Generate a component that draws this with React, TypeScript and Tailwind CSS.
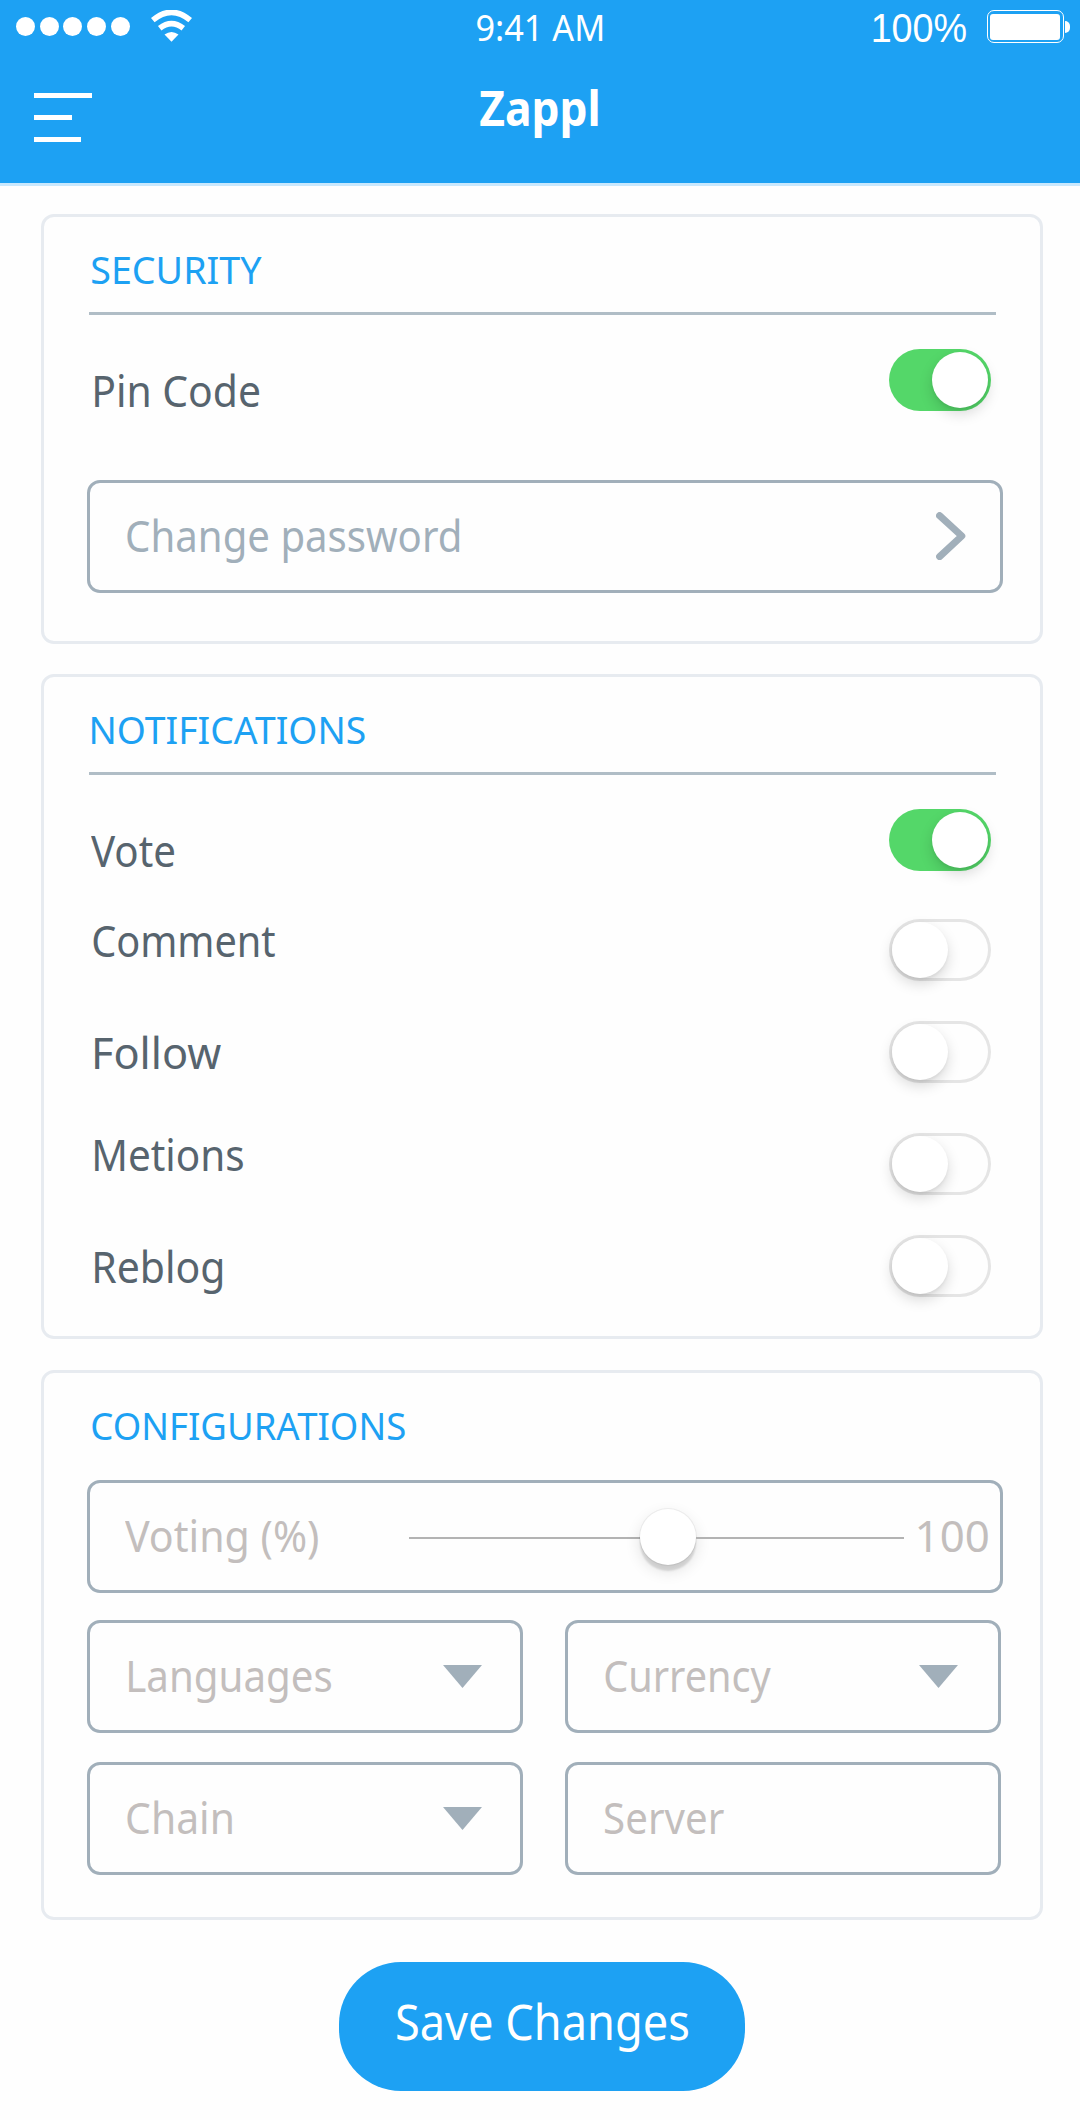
import { useLayoutEffect, useRef, useState } from "react";

type FitTextProps = { children: string; width: number; className?: string };

/* A line of text whose inked glyphs span exactly `width` pixels. */
function FitText({ children, width, className = "" }: FitTextProps) {
  const ref = useRef<HTMLSpanElement>(null);
  const [fit, setFit] = useState({ scale: 1, shift: 0 });

  useLayoutEffect(() => {
    const ctx = document.createElement("canvas").getContext("2d");
    if (!ref.current || !ctx) return;
    const style = getComputedStyle(ref.current);
    // Measured at ten times the size, since ink bounds come in whole pixels.
    ctx.font = `${style.fontWeight} ${parseFloat(style.fontSize) * 10}px ${style.fontFamily}`;
    const m = ctx.measureText(children);
    const left = m.actualBoundingBoxLeft / 10;
    const scale = width / (m.actualBoundingBoxRight / 10 + left);
    setFit({ scale, shift: left * scale });
  }, [children, width]);

  return (
    <div className={`shrink-0 whitespace-nowrap ${className}`} style={{ width }}>
      <span
        ref={ref}
        className="inline-block origin-left align-top"
        style={{ transform: `translateX(${fit.shift}px) scaleX(${fit.scale})` }}
      >
        {children}
      </span>
    </div>
  );
}

function Toggle({ on = false, className = "" }: { on?: boolean; className?: string }) {
  return (
    <div
      role="switch"
      aria-checked={on}
      className={`flex h-[62px] w-[102px] shrink-0 items-center rounded-full p-[3px] ${
        on ? "justify-end bg-[#54d769]" : "justify-start shadow-[inset_0_0_0_3px_#e5e5e5]"
      } ${className}`}
    >
      <div className="size-14 rounded-full bg-white shadow-[0_6px_14px_rgba(0,0,0,0.15),0_2px_3px_rgba(0,0,0,0.05)]" />
    </div>
  );
}

function SectionTitle({ children, width }: { children: string; width: number }) {
  return (
    <FitText width={width} className="ml-[5px] h-[52px] pt-px text-[39px] leading-[52px] text-[#1da1f3]">
      {children}
    </FitText>
  );
}

function Caret({ className = "" }: { className?: string }) {
  return (
    <svg viewBox="0 0 39 23" className={`h-[23px] w-[39px] ${className}`}>
      <path d="M0 0H39L19.5 23Z" fill="#a1afba" />
    </svg>
  );
}

type FieldProps = { label: string; width: number; caret?: string; labelClass?: string };

function Field({ label, width, caret, labelClass = "" }: FieldProps) {
  return (
    <div className="flex h-[113px] w-[436px] items-start justify-between rounded-[13px] border-3 border-[#a1afba] pt-[21px] pl-[37px]">
      <FitText width={width} className={`pt-px text-[44px] leading-[60px] text-[#c3bebd] ${labelClass}`}>
        {label}
      </FitText>
      {caret && <Caret className={caret} />}
    </div>
  );
}

const card = "ml-[41px] w-[1002px] rounded-[13px] border-3 border-[#e7ebf0] pt-[25px] pl-[43px]";
const rowText = "h-[60px] pt-[1.5px] text-[44px] leading-[60px] text-[#57646e]";

export default function App() {
  return (
    <div className="h-[2120px] w-[1080px] overflow-hidden bg-[#fefefe] font-['Noto_Sans','Open_Sans',sans-serif]">
      <header className="h-[186px] border-b-3 border-[#c9e8fd] bg-[#1da1f3] text-white">
        <div className="flex h-[54px] items-start">
          <div className="mt-[17px] ml-4 flex gap-[4.7px]">
            {[0, 1, 2, 3, 4].map((i) => (
              <span key={i} className="size-[19px] rounded-full bg-white" />
            ))}
          </div>
          <svg viewBox="0 0 41 32" className="mt-[9.5px] ml-[21px] h-8 w-[41px]" fill="none" stroke="#fff">
            <path d="M1.8 10.2Q20.5 -5.5 39.2 10.2" strokeWidth="5.6" />
            <path d="M8.7 18.2Q20.5 9 32.3 18.2" strokeWidth="5.6" />
            <path d="M13.5 24.4Q20.5 19.4 27.5 24.4L20.5 31.7Z" fill="#fff" stroke="none" />
          </svg>
          <FitText width={125} className="mt-[4px] ml-[285px] text-[36px] leading-[48px]">
            9:41 AM
          </FitText>
          <FitText
            width={93}
            className="mt-[4px] ml-[271px] font-['Liberation_Sans',Arial,sans-serif] text-[40px] leading-[48px]"
          >
            100%
          </FitText>
          <div className="mt-2.5 ml-[21px] h-[33px] w-[77px] rounded-[7px] border-[1.5px] border-white p-[2.5px]">
            <div className="h-full rounded-[3px] bg-white" />
          </div>
          <span className="mt-[20.5px] ml-px h-3 w-[5px] rounded-r-full bg-white" />
        </div>
        <div className="flex items-start">
          <div className="mt-[39px] ml-[34px] flex w-[58px] flex-col gap-[17px]">
            <span className="h-[5px] w-[58px] bg-white" />
            <span className="h-[5px] w-[38px] bg-white" />
            <span className="h-[5px] w-[47px] bg-white" />
          </div>
          <FitText width={118} className="mt-[23px] ml-[388px] text-[49px] leading-[60px] font-bold">
            Zappl
          </FitText>
        </div>
      </header>

      <section className={`${card} mt-7 h-[430px]`}>
        <SectionTitle width={170}>SECURITY</SectionTitle>
        <div className="mt-[18px] ml-0.5 h-[3px] w-[907px] bg-[#b0bdc6]" />
        <div className="mt-[34px] ml-2 flex w-[896px] items-start justify-between">
          <FitText width={164} className={`${rowText} mt-[9px]`}>
            Pin Code
          </FitText>
          <Toggle on />
        </div>
        <div className="mt-[62px] flex h-[113px] w-[916px] items-start rounded-[13px] border-3 border-[#a1afba] pt-5 pl-[37px]">
          <FitText width={332} className="pt-[1.5px] text-[44px] leading-[60px] text-[#a1afba]">
            Change password
          </FitText>
          <svg
            viewBox="0 0 30 48"
            className="mt-[9px] ml-[477px] h-12 w-[30px]"
            fill="none"
            stroke="#a1afba"
            strokeWidth="7"
            strokeLinecap="round"
            strokeLinejoin="round"
          >
            <path d="M3.6 3.6L25.8 24L3.6 44.6" />
          </svg>
        </div>
      </section>

      <section className={`${card} mt-[30px] h-[665px]`}>
        <SectionTitle width={273}>NOTIFICATIONS</SectionTitle>
        <div className="mt-[18px] ml-0.5 h-[3px] w-[907px] bg-[#b0bdc6]" />
        <div className="mt-[34px] ml-1 flex w-[900px] items-start justify-between">
          <div className="mt-[9px] flex flex-col">
            <FitText width={83} className={rowText}>
              Vote
            </FitText>
            <FitText width={182} className={`${rowText} mt-[30px] ml-0.5`}>
              Comment
            </FitText>
            <FitText width={126} className={`${rowText} mt-[52px] ml-1`}>
              Follow
            </FitText>
            <FitText width={148} className={`${rowText} mt-[42px] ml-1`}>
              Metions
            </FitText>
            <FitText width={127} className={`${rowText} mt-[52px] ml-1`}>
              Reblog
            </FitText>
          </div>
          <div className="flex flex-col">
            <Toggle on />
            <Toggle className="mt-12" />
            <Toggle className="mt-10" />
            <Toggle className="mt-[50px]" />
            <Toggle className="mt-10" />
          </div>
        </div>
      </section>

      <section className={`${card} mt-[31px] h-[550px]`}>
        <SectionTitle width={313}>CONFIGURATIONS</SectionTitle>
        <div className="mt-[30px] flex h-[113px] w-[916px] items-start rounded-[13px] border-3 border-[#a1afba] pt-5 pl-[35px] text-[44px] leading-[60px] text-[#c3bebd]">
          <FitText width={193} className="pt-[1.5px]">
            Voting (%)
          </FitText>
          <div className="mt-[5.5px] ml-[91px] flex h-14 w-[495px] items-center">
            <span className="mt-[3px] h-0.5 w-[231px] bg-[#b3b3b3]" />
            <span className="size-14 shrink-0 rounded-full bg-white shadow-[0_0_0_1px_rgba(0,0,0,0.05),0_6px_2px_rgba(0,0,0,0.12),0_6px_16px_rgba(0,0,0,0.12)]" />
            <span className="mt-[3px] h-0.5 flex-1 bg-[#b3b3b3]" />
          </div>
          <FitText width={70} className="ml-3.5 pt-[1.5px]">
            100
          </FitText>
        </div>
        <div className="mt-[27px] grid w-[914px] grid-cols-2 gap-x-[42px] gap-y-[29px]">
          <Field label="Languages" width={202} caret="mt-[21px] mr-[38px]" labelClass="ml-[1.5px]" />
          <Field label="Currency" width={166} caret="mt-[21px] mr-[40px]" />
          <Field label="Chain" width={105} caret="mt-[21px] mr-[38px]" />
          <Field label="Server" width={119} />
        </div>
      </section>

      <button className="mt-[42px] ml-[339px] flex h-[129px] w-[406px] items-start rounded-[62px] bg-[#1da1f3] pt-[27px] pl-[58px] text-left text-white">
        <FitText width={291} className="text-[50px] leading-[64px]">
          Save Changes
        </FitText>
      </button>
    </div>
  );
}
